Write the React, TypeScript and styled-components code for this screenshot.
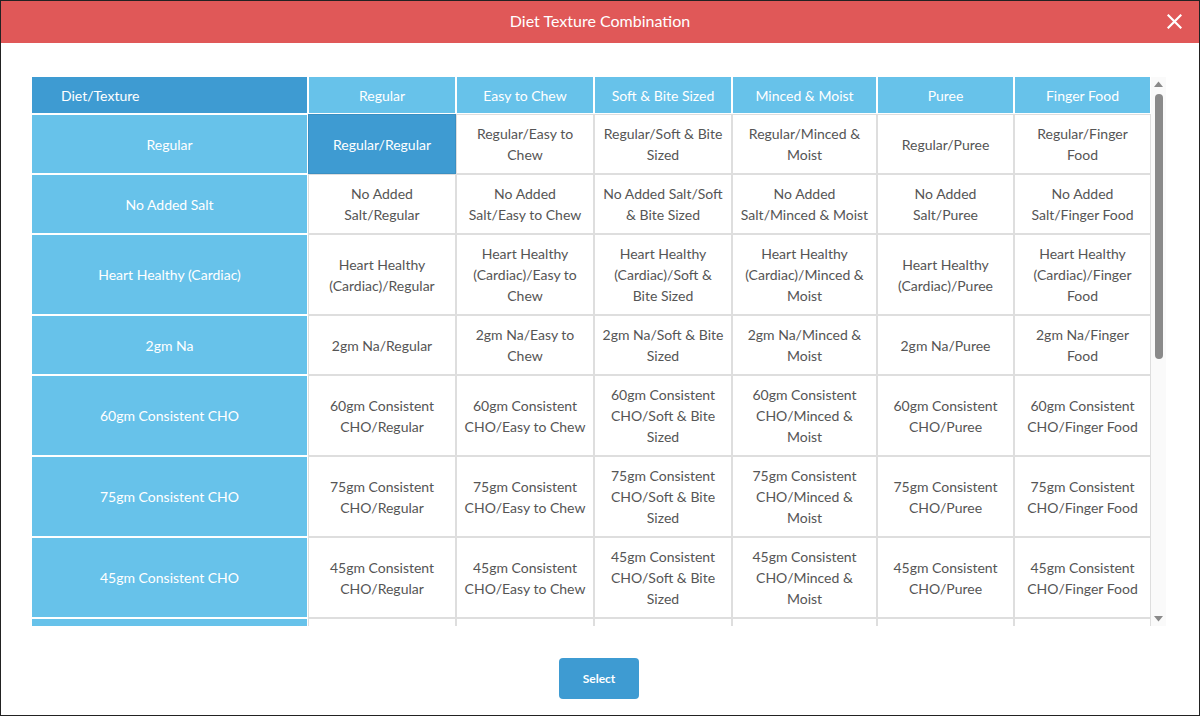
import React, { useRef, useState } from 'react';
import styled, { createGlobalStyle } from 'styled-components';

const GlobalStyle = createGlobalStyle`
    html, body {
        margin: 0;
        padding: 0;
        background: #fff;
    }
    body {
        font-family: Lato, "Open Sans", Arial, sans-serif;
    }
`;

const Dialog = styled.div`
    width: 1200px;
    height: 716px;
    box-sizing: border-box;
    border: 1px solid #222;
    display: flex;
    flex-direction: column;
    background: #fff;
`;

const Header = styled.div`
    height: 42px;
    box-sizing: border-box;
    padding-bottom: 3px;
    background: #e05858;
    display: flex;
    align-items: center;
    justify-content: center;
    position: relative;
    color: #fff;
    font-size: 16px;
    flex-shrink: 0;
`;

const CloseButton = styled.button`
    position: absolute;
    right: 16px;
    top: 11px;
    width: 18px;
    height: 18px;
    padding: 0;
    border: none;
    background: transparent;
    cursor: pointer;
    display: flex;
    align-items: center;
    justify-content: center;
`;

const Body = styled.div`
    flex: 1;
    display: flex;
    flex-direction: column;
    align-items: center;
    padding: 34px 33px 0 31px;
`;

const ScrollFrame = styled.div`
    width: 100%;
    height: 549px;
    display: flex;
`;

const Viewport = styled.div`
    flex: 1;
    overflow-y: auto;
    scrollbar-width: none;
    &::-webkit-scrollbar {
        display: none;
    }
`;

const ScrollBar = styled.div`
    width: 15px;
    flex-shrink: 0;
    background: #fafafa;
    display: flex;
    flex-direction: column;
    align-items: center;
`;

const ArrowButton = styled.div`
    height: 14px;
    width: 15px;
    display: flex;
    align-items: center;
    justify-content: center;
    flex-shrink: 0;
`;

const Track = styled.div`
    flex: 1;
    width: 100%;
    padding: 3px 0;
    box-sizing: border-box;
    display: flex;
    flex-direction: column;
    align-items: center;
`;

const Thumb = styled.div`
    width: 8px;
    margin-left: 1px;
    background: #8a8a8a;
    border-radius: 4px;
`;

const Table = styled.table`
    width: 100%;
    table-layout: fixed;
    border-collapse: separate;
    border-spacing: 0;
    font-size: 14px;
    line-height: 21px;
`;

const HeadCell = styled.th<{ corner?: boolean }>`
    position: sticky;
    top: 0;
    z-index: 1;
    font-weight: normal;
    color: #fff;
    background: ${p => (p.corner ? '#3e9bd2' : '#67c2ea')};
    border: 1px solid #fff;
    border-top: none;
    border-left: ${p => (p.corner ? 'none' : '1px solid #fff')};
    padding: 8px 6px 7px;
    text-align: ${p => (p.corner ? 'left' : 'center')};
    padding-left: ${p => (p.corner ? '29px' : '6px')};
`;

const LabelCell = styled.td`
    background: #67c2ea;
    color: #fff;
    border: 1px solid #fff;
    border-left: none;
    text-align: center;
    padding: 8px 6px;
`;

const DataCell = styled.td<{ selected: boolean }>`
    background: ${p => (p.selected ? '#3e9bd2' : '#fff')};
    color: ${p => (p.selected ? '#fff' : '#555')};
    border: 1px solid ${p => (p.selected ? '#3a8fc2' : '#dedede')};
    text-align: center;
    padding: 8px 7px;
    cursor: pointer;
`;

const Footer = styled.div`
    padding-top: 32px;
`;

const SelectButton = styled.button`
    width: 80px;
    height: 41px;
    border: none;
    border-radius: 4px;
    background: #3e9bd2;
    color: #fff;
    font-family: Lato, Arial, sans-serif;
    font-weight: bold;
    font-size: 12px;
    cursor: pointer;
`;

const diets = [
    'Regular',
    'No Added Salt',
    'Heart Healthy (Cardiac)',
    '2gm Na',
    '60gm Consistent CHO',
    '75gm Consistent CHO',
    '45gm Consistent CHO',
    'Renal',
    'Low Fat',
    'Low Cholesterol',
    'High Protein',
    'Gluten Free',
    'Clear Liquid',
    'Full Liquid',
];

const textures = ['Regular', 'Easy to Chew', 'Soft & Bite Sized', 'Minced & Moist', 'Puree', 'Finger Food'];

const colWidths = [276, 148, 138, 138, 145, 137, 137];

const TRACK = 549 - 28 - 6;

const App = () => {
    const [selected, setSelected] = useState({ row: 0, col: 0 });
    const [scroll, setScroll] = useState({ top: 0, ratio: 0.515 });
    const viewRef = useRef<HTMLDivElement>(null);

    const onScroll = () => {
        const el = viewRef.current;
        if (!el) return;
        setScroll({ top: el.scrollTop / el.scrollHeight, ratio: el.clientHeight / el.scrollHeight });
    };

    return <>
        <GlobalStyle />
        <Dialog>
            <Header>
                Diet Texture Combination
                <CloseButton aria-label="Close">
                    <svg width="15" height="15" viewBox="0 0 15 15">
                        <path d="M1.5 1.5 L13.5 13.5 M13.5 1.5 L1.5 13.5" stroke="#fff" strokeWidth="2.2" strokeLinecap="square" />
                    </svg>
                </CloseButton>
            </Header>
            <Body>
                <ScrollFrame>
                    <Viewport ref={viewRef} onScroll={onScroll}>
                        <Table>
                            <colgroup>
                                {colWidths.map((w, i) => <col key={i} style={{ width: w }} />)}
                            </colgroup>
                            <thead>
                                <tr>
                                    <HeadCell corner>Diet/Texture</HeadCell>
                                    {textures.map(t => <HeadCell key={t}>{t}</HeadCell>)}
                                </tr>
                            </thead>
                            <tbody>
                                {diets.map((d, r) =>
                                    <tr key={d}>
                                        <LabelCell>{d}</LabelCell>
                                        {textures.map((t, c) =>
                                            <DataCell
                                                key={t}
                                                selected={selected.row === r && selected.col === c}
                                                onClick={() => setSelected({ row: r, col: c })}
                                            >{d}/{t}</DataCell>
                                        )}
                                    </tr>
                                )}
                            </tbody>
                        </Table>
                    </Viewport>
                    <ScrollBar>
                        <ArrowButton>
                            <svg width="9" height="6" viewBox="0 0 9 6"><path d="M0 6 L4.5 0.5 L9 6 Z" fill="#8a8a8a" /></svg>
                        </ArrowButton>
                        <Track>
                            <Thumb style={{ marginTop: scroll.top * TRACK, height: scroll.ratio * TRACK }} />
                        </Track>
                        <ArrowButton>
                            <svg width="9" height="6" viewBox="0 0 9 6"><path d="M0 0 L4.5 5.5 L9 0 Z" fill="#8a8a8a" /></svg>
                        </ArrowButton>
                    </ScrollBar>
                </ScrollFrame>
                <Footer>
                    <SelectButton type="button">Select</SelectButton>
                </Footer>
            </Body>
        </Dialog>
    </>;
};

export default App;
